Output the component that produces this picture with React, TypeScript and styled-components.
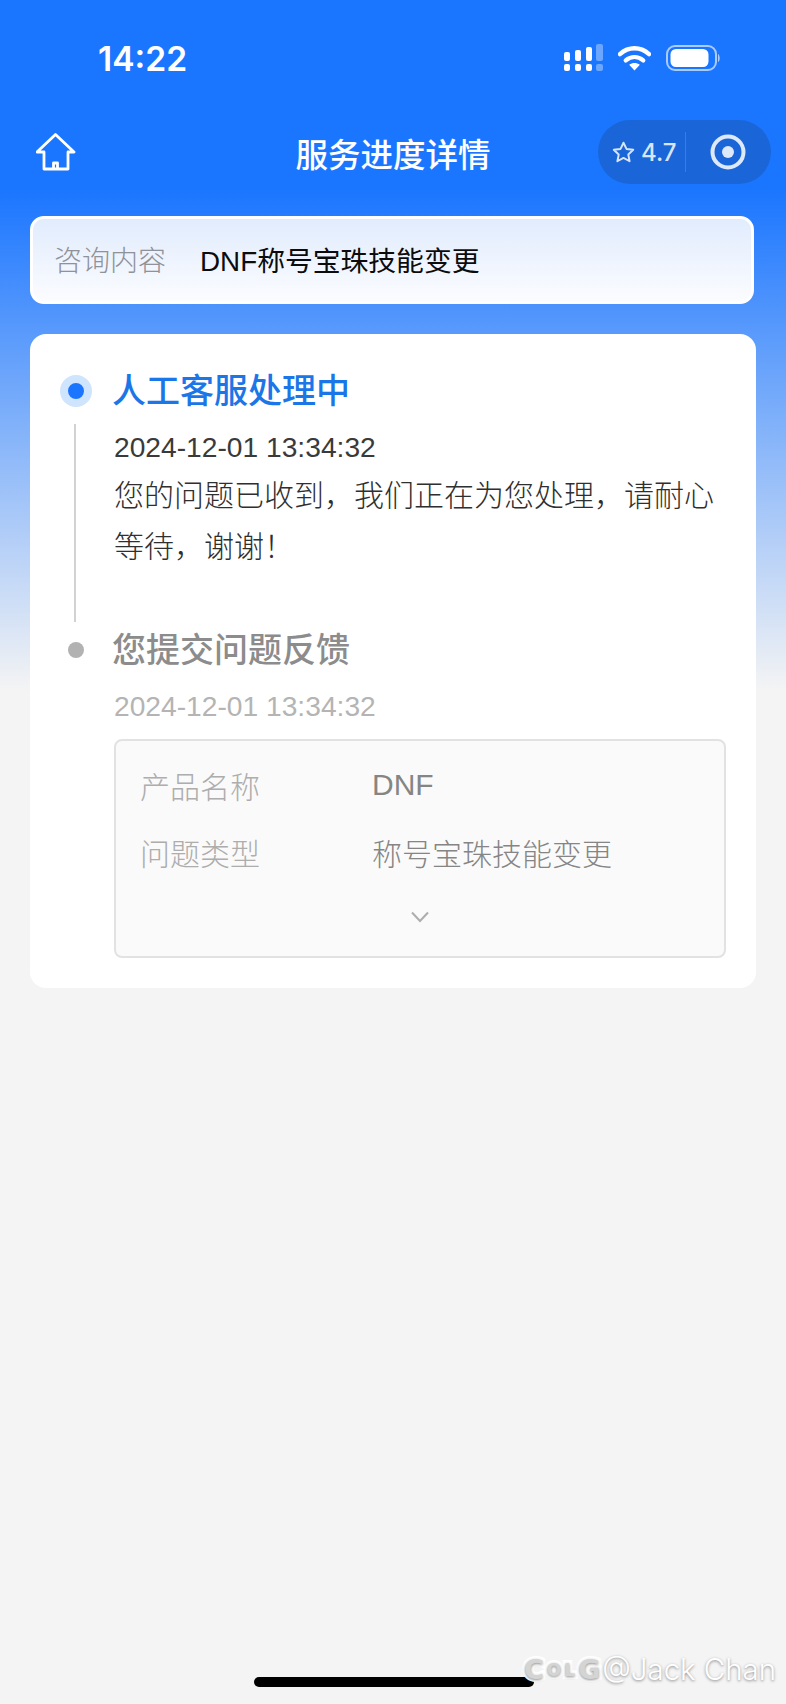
import styled, { createGlobalStyle } from "styled-components";

const GlobalStyle = createGlobalStyle`
  html, body {
    margin: 0;
    padding: 0;
    background: #f4f4f4;
  }
  * {
    box-sizing: border-box;
  }
`;

const FONT = `"Liberation Sans", "Noto Sans CJK SC", sans-serif`;

const Page = styled.div`
  position: relative;
  width: 786px;
  height: 1704px;
  overflow: hidden;
  font-family: ${FONT};
  background: linear-gradient(180deg, #1b76ff 0px, #1b76ff 190px, #f4f4f4 690px);
`;

const StatusBar = styled.div`
  display: flex;
  align-items: center;
  justify-content: space-between;
  height: 120px;
  padding: 0 65px 4px 98px;
`;

const Clock = styled.span`
  font-family: Inter, sans-serif;
  font-size: 33.6px;
  font-weight: 600;
  color: #fff;
`;

const StatusIcons = styled.div`
  display: flex;
  align-items: center;
  gap: 15px;
`;

const NavBar = styled.div`
  display: grid;
  grid-template-columns: 1fr auto 1fr;
  align-items: center;
  height: 64px;
  padding: 0 15px;
`;

const HomeButton = styled.div`
  display: flex;
  align-items: center;
  padding-left: 21px;
`;

const Title = styled.h1`
  margin: 0;
  font-size: 32.5px;
  font-weight: 500;
  color: #fff;
`;

const Capsule = styled.div`
  justify-self: end;
  display: flex;
  align-items: center;
  width: 173px;
  height: 64px;
  padding-left: 14px;
  border-radius: 32px;
  background: #1a66d8;
`;

const Rating = styled.span`
  display: flex;
  align-items: center;
  gap: 6px;
  width: 73px;
  font-family: Inter, sans-serif;
  font-size: 24px;
  font-weight: 500;
  color: #d9e5f8;
`;

const CapsuleDivider = styled.div`
  width: 1px;
  height: 40px;
  background: #3b7ce0;
`;

const CapsuleTarget = styled.div`
  flex: 1;
  display: flex;
  justify-content: center;
  padding-right: 2px;
`;

const Inquiry = styled.div`
  display: flex;
  align-items: center;
  height: 88px;
  margin: 32px 32px 0 30px;
  padding: 0 0 2px 21px;
  border: 3px solid #fff;
  border-radius: 14px;
  background: linear-gradient(180deg, #e1ecfd 0%, #fbfcff 100%);
`;

const InquiryLabel = styled.span`
  width: 146px;
  font-size: 28px;
  font-weight: 300;
  color: #8f9298;
`;

const InquiryValue = styled.span`
  font-size: 27.8px;
  font-weight: 400;
  color: #0c0c0c;
`;

const DetailCard = styled.div`
  height: 654px;
  margin: 30px 30px 0 30px;
  padding: 34px 30px 0;
  border-radius: 16px;
  background: #fff;
`;

const Step = styled.div`
  display: grid;
  grid-template-columns: 32px 1fr;
  column-gap: 22px;
`;

const Rail = styled.div`
  display: flex;
  flex-direction: column;
  align-items: center;
`;

const DotSlot = styled.div`
  display: flex;
  align-items: center;
  justify-content: center;
  height: 42px;
  margin-top: 2px;
`;

const ActiveDot = styled.div`
  width: 32px;
  height: 32px;
  border-radius: 50%;
  border: 8px solid #cfe4fd;
  background: #1b76ff;
`;

const IdleDot = styled.div`
  width: 16px;
  height: 16px;
  border-radius: 50%;
  background: #b2b2b2;
`;

const RailLine = styled.div`
  flex: 1;
  width: 2px;
  margin: 12px 2px 5px 0;
  background: #d2d2d2;
`;

const StepBody = styled.div<{ $gap: number }>`
  padding-bottom: ${(p) => p.$gap}px;
`;

const StepTitle = styled.div<{ $active?: boolean }>`
  height: 42px;
  margin: 2px 0 0 -2px;
  line-height: 42px;
  font-size: 34px;
  font-weight: 500;
  color: ${(p) => (p.$active ? "#1b76e8" : "#8c8c8c")};
`;

const StepTime = styled.div<{ $active?: boolean }>`
  height: 40px;
  margin-top: 15px;
  line-height: 40px;
  font-size: 28.2px;
  color: ${(p) => (p.$active ? "#3a3a3a" : "#b4b4b4")};
`;

const StepText = styled.p`
  margin: 4px 0 0;
  font-size: 30px;
  font-weight: 300;
  line-height: 50.5px;
  color: #2f2f2f;
`;

const InfoBox = styled.div`
  height: 219px;
  margin-top: 13px;
  padding: 24px 0 0 24px;
  border: 2px solid #e2e2e2;
  border-radius: 8px;
  background: #fafafa;
`;

const InfoRows = styled.div`
  display: flex;
  flex-direction: column;
  gap: 27px;
`;

const InfoRow = styled.div`
  display: flex;
  align-items: center;
  height: 40px;
`;

const InfoLabel = styled.span`
  width: 232px;
  font-size: 30px;
  font-weight: 300;
  color: #adadad;
`;

const InfoValue = styled.span`
  font-size: 30px;
  font-weight: 300;
  color: #858585;
`;

const Expand = styled.div`
  display: flex;
  justify-content: center;
  margin-top: 39px;
  padding-right: 24px;
`;

const HomeIndicator = styled.div`
  position: absolute;
  left: 254px;
  top: 1677px;
  width: 280px;
  height: 10px;
  border-radius: 5px;
  background: #000;
`;

const Watermark = styled.div`
  position: absolute;
  left: 524px;
  top: 1652px;
  display: flex;
  align-items: center;
  gap: 2px;
  color: #fff;
  text-shadow: 0 1px 3px rgba(0, 0, 0, 0.45);
  white-space: nowrap;
`;

const WatermarkLogo = styled.span`
  display: flex;
  align-items: center;
  gap: 3px;
  font-family: "DejaVu Sans", sans-serif;
  font-weight: 700;
  color: #d4d4d4;
  -webkit-text-stroke: 6px #fff;
  paint-order: stroke fill;
`;

const LogoLetter = styled.span<{ $big?: boolean }>`
  font-size: ${(p) => (p.$big ? 27 : 17)}px;
`;

const WatermarkName = styled.span`
  font-family: Inter, sans-serif;
  font-size: 29.4px;
  font-weight: 300;
`;

const SignalIcon = () => (
  <svg width="41" height="28" viewBox="0 0 41 28">
    <g fill="#fff">
      <rect x="2" y="20" width="6" height="7" rx="2" />
      <rect x="13" y="20" width="6" height="7" rx="2" />
      <rect x="24" y="20" width="6" height="7" rx="2" />
      <rect x="2" y="8" width="6" height="9" rx="2" />
      <rect x="13" y="6" width="6" height="11" rx="2" />
      <rect x="24" y="3" width="6" height="14" rx="2" />
    </g>
    <g fill="#fff" opacity="0.35">
      <rect x="34" y="20" width="7" height="7" rx="2" />
      <rect x="34" y="0" width="7" height="17" rx="2" />
    </g>
  </svg>
);

const WifiIcon = () => (
  <svg width="33" height="26" viewBox="0 0 34 26" fill="none">
    <path d="M2 9 C11 1 23 1 32 9" stroke="#fff" strokeWidth="4.5" strokeLinecap="round" />
    <path d="M8 15.5 C13.5 11 20.5 11 26 15.5" stroke="#fff" strokeWidth="4.5" strokeLinecap="round" />
    <path d="M11.5 20 C15 17.5 19 17.5 22.5 20 L17 26 Z" fill="#fff" />
  </svg>
);

const BatteryIcon = () => (
  <svg width="55" height="26" viewBox="0 0 55 26" fill="none">
    <rect x="1" y="1" width="49" height="24" rx="8" stroke="#a9cbff" strokeWidth="2" />
    <rect x="4.5" y="4" width="38" height="18" rx="5.5" fill="#fff" />
    <path d="M52 9 C54 10 54.5 16 52 17 Z" fill="#a9cbff" />
  </svg>
);

const HomeIcon = () => (
  <svg width="40" height="38" viewBox="0 0 40 38" fill="none" stroke="#fff" strokeWidth="2.8" strokeLinejoin="round">
    <path d="M19.5 1.5 L38 19 H32 V36 H8 V19 H1 Z" />
    <path d="M17.5 36 V30 H21.5 V36" />
  </svg>
);

const StarIcon = () => (
  <svg width="23" height="22" viewBox="0 0 24 23" fill="none" stroke="#d9e5f8" strokeWidth="2" strokeLinejoin="round">
    <path d="M12 1.8 L15.1 8.3 L22.2 9.2 L17 14.1 L18.4 21.2 L12 17.7 L5.6 21.2 L7 14.1 L1.8 9.2 L8.9 8.3 Z" />
  </svg>
);

const TargetIcon = () => (
  <svg width="36" height="36" viewBox="0 0 36 36" fill="none">
    <circle cx="18" cy="18" r="15.5" stroke="#dde8f9" strokeWidth="4" />
    <circle cx="18" cy="18" r="6" fill="#dde8f9" />
  </svg>
);

const ChevronIcon = () => (
  <svg width="18" height="12" viewBox="0 0 18 12" fill="none" stroke="#adadad" strokeWidth="2">
    <path d="M1 1.5 L9 10 L17 1.5" />
  </svg>
);

const infoRows = [
  { label: "产品名称", value: "DNF" },
  { label: "问题类型", value: "称号宝珠技能变更" },
];

export default function App() {
  return (
    <Page>
      <GlobalStyle />
      <StatusBar>
        <Clock>14:22</Clock>
        <StatusIcons>
          <SignalIcon />
          <WifiIcon />
          <BatteryIcon />
        </StatusIcons>
      </StatusBar>
      <NavBar>
        <HomeButton>
          <HomeIcon />
        </HomeButton>
        <Title>服务进度详情</Title>
        <Capsule>
          <Rating>
            <StarIcon />
            4.7
          </Rating>
          <CapsuleDivider />
          <CapsuleTarget>
            <TargetIcon />
          </CapsuleTarget>
        </Capsule>
      </NavBar>
      <Inquiry>
        <InquiryLabel>咨询内容</InquiryLabel>
        <InquiryValue>DNF称号宝珠技能变更</InquiryValue>
      </Inquiry>
      <DetailCard>
        <Step>
          <Rail>
            <DotSlot>
              <ActiveDot />
            </DotSlot>
            <RailLine />
          </Rail>
          <StepBody $gap={55}>
            <StepTitle $active>人工客服处理中</StepTitle>
            <StepTime $active>2024-12-01 13:34:32</StepTime>
            <StepText>您的问题已收到，我们正在为您处理，请耐心等待，谢谢！</StepText>
          </StepBody>
        </Step>
        <Step>
          <Rail>
            <DotSlot>
              <IdleDot />
            </DotSlot>
          </Rail>
          <StepBody $gap={0}>
            <StepTitle>您提交问题反馈</StepTitle>
            <StepTime>2024-12-01 13:34:32</StepTime>
            <InfoBox>
              <InfoRows>
                {infoRows.map((row) => (
                  <InfoRow key={row.label}>
                    <InfoLabel>{row.label}</InfoLabel>
                    <InfoValue>{row.value}</InfoValue>
                  </InfoRow>
                ))}
              </InfoRows>
              <Expand>
                <ChevronIcon />
              </Expand>
            </InfoBox>
          </StepBody>
        </Step>
      </DetailCard>
      <HomeIndicator />
      <Watermark>
        <WatermarkLogo>
          <LogoLetter $big>C</LogoLetter>
          <LogoLetter>O</LogoLetter>
          <LogoLetter>L</LogoLetter>
          <LogoLetter $big>G</LogoLetter>
        </WatermarkLogo>
        <WatermarkName>@Jack Chan</WatermarkName>
      </Watermark>
    </Page>
  );
}
